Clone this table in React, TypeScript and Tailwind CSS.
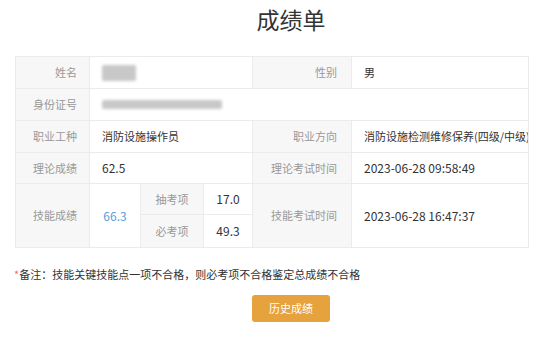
import React from 'react';

const font = { fontFamily: '"Noto Sans CJK SC", "Noto Sans", sans-serif' };

const labelCls = 'bg-[#f7f7f7] text-[#999] text-[11px] text-right pr-[12px] border border-[#ebebeb] font-normal';
const valueCls = 'bg-white text-[#333] text-[11px] pl-[12px] border border-[#ebebeb] text-left';
const numCls = 'bg-white text-[#333] text-[12px] pl-[12px] border border-[#ebebeb] text-left';

function Blur({ w, h }: { w: number; h: number }) {
	return (
		<div
			className="bg-[#c8c8c8] blur-[1.5px] rounded-[2px]"
			style={{ width: w, height: h }}
		/>
	);
}

export default function App() {
	return (
		<div className="w-[554px] h-[348px] bg-white overflow-hidden text-[12px]" style={font}>
			<h1 className="pl-[28px] pt-[3px] h-[56px] text-center text-[23px] leading-[32px] text-[#333] font-normal">
				成绩单
			</h1>

			<table className="ml-[15px] w-[513px] table-fixed border-collapse">
				<colgroup>
					<col className="w-[74px]" />
					<col className="w-[51px]" />
					<col className="w-[63px]" />
					<col className="w-[49px]" />
					<col className="w-[99px]" />
					<col className="w-[177px]" />
				</colgroup>
				<tbody>
					<tr className="h-[32px]">
						<th className={labelCls}>姓名</th>
						<td colSpan={3} className={valueCls}>
							<Blur w={34} h={16} />
						</td>
						<th className={labelCls + ' pr-[14px]'}>性别</th>
						<td className={valueCls}>男</td>
					</tr>
					<tr className="h-[32px]">
						<th className={labelCls}>身份证号</th>
						<td colSpan={5} className={valueCls}>
							<Blur w={120} h={9} />
						</td>
					</tr>
					<tr className="h-[32px]">
						<th className={labelCls}>职业工种</th>
						<td colSpan={3} className={valueCls}>消防设施操作员</td>
						<th className={labelCls + ' pr-[14px]'}>职业方向</th>
						<td className={valueCls + ' whitespace-nowrap overflow-hidden'}>
							消防设施检测维修保养(四级/中级)
						</td>
					</tr>
					<tr className="h-[31px]">
						<th className={labelCls}>理论成绩</th>
						<td colSpan={3} className={numCls}>62.5</td>
						<th className={labelCls + ' pr-[14px]'}>理论考试时间</th>
						<td className={numCls}>2023-06-28 09:58:49</td>
					</tr>
					<tr className="h-[31px]">
						<th rowSpan={2} className={labelCls}>技能成绩</th>
						<td rowSpan={2} className="bg-white text-[#5a9fd6] text-[12px] text-center border border-[#ebebeb]">
							66.3
						</td>
						<td className="bg-[#f7f7f7] text-[#999] text-[11px] text-center border border-[#ebebeb]">抽考项</td>
						<td className="bg-white text-[#333] text-[12px] text-center border border-[#ebebeb]">17.0</td>
						<th rowSpan={2} className={labelCls + ' pr-[14px]'}>技能考试时间</th>
						<td rowSpan={2} className={numCls}>2023-06-28 16:47:37</td>
					</tr>
					<tr className="h-[33px]">
						<td className="bg-[#f7f7f7] text-[#999] text-[11px] text-center border border-[#ebebeb]">必考项</td>
						<td className="bg-white text-[#333] text-[12px] text-center border border-[#ebebeb]">49.3</td>
					</tr>
				</tbody>
			</table>

			<p className="mt-[17px] ml-[14px] text-[11px] leading-[18px] text-[#333]">
				<span className="text-[#f56c6c]">*</span>备注：技能关键技能点一项不合格，则必考项不合格鉴定总成绩不合格
			</p>

			<div className="mt-[12px] pl-[28px] flex justify-center">
				<button className="w-[78px] h-[27px] rounded-[3px] bg-[#e6a23c] text-white text-[11px] leading-none">
					历史成绩
				</button>
			</div>
		</div>
	);
}
